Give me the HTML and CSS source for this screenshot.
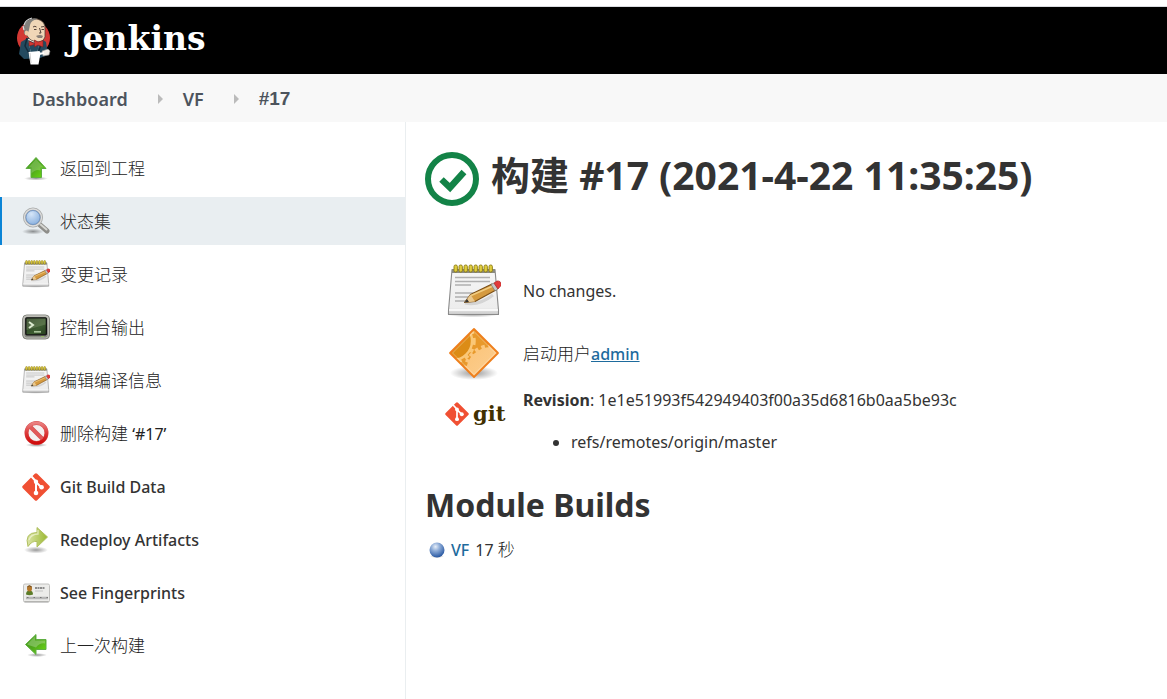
FILE: index.html
```html
<!DOCTYPE html>
<html lang="zh-CN">
<head>
<meta charset="utf-8">
<meta name="viewport" content="width=device-width, initial-scale=1">
<title>VF #17 [Jenkins]</title>
<link rel="stylesheet" href="styles.css">
</head>
<body>
<svg class="defs" aria-hidden="true">
  <defs>
    <linearGradient id="g-green" x1="0" y1="0" x2="1" y2="1"><stop offset="0" stop-color="#3f9a12"/><stop offset=".5" stop-color="#50a81c"/><stop offset="1" stop-color="#6fe010"/></linearGradient>
    <linearGradient id="g-paper" x1="0" y1="0" x2="0" y2="1"><stop offset="0" stop-color="#f6f6f6"/><stop offset=".85" stop-color="#ededed"/><stop offset="1" stop-color="#c9c9c9"/></linearGradient>
    <radialGradient id="g-lens" cx=".4" cy=".3" r=".75"><stop offset="0" stop-color="#d6e6f8"/><stop offset="1" stop-color="#7ea8da"/></radialGradient>
    <radialGradient id="g-shadow"><stop offset="0" stop-color="#000" stop-opacity=".4"/><stop offset="1" stop-color="#000" stop-opacity="0"/></radialGradient>
    <linearGradient id="g-screen" x1="0" y1="0" x2="1" y2="1"><stop offset="0" stop-color="#22371d"/><stop offset=".6" stop-color="#3d5c31"/><stop offset="1" stop-color="#263d1e"/></linearGradient>
    <linearGradient id="g-metal" x1="0" y1="0" x2="0" y2="1"><stop offset="0" stop-color="#b5b5ae"/><stop offset="1" stop-color="#858780"/></linearGradient>
    <linearGradient id="g-red" x1="0" y1="0" x2="0" y2="1"><stop offset="0" stop-color="#ea8080"/><stop offset=".5" stop-color="#dc3a3a"/><stop offset="1" stop-color="#cf0c0c"/></linearGradient>
    <linearGradient id="g-lime" x1="0" y1="0" x2="1" y2="0"><stop offset="0" stop-color="#dbe4a6"/><stop offset="1" stop-color="#9bb932"/></linearGradient>
    <linearGradient id="g-orange" x1="0" y1="0" x2="1" y2="1"><stop offset="0" stop-color="#fbc479"/><stop offset="1" stop-color="#fdd5a0"/></linearGradient>
    <radialGradient id="g-ball" cx=".4" cy=".28" r=".7"><stop offset="0" stop-color="#e6eef8"/><stop offset=".4" stop-color="#8fadd8"/><stop offset="1" stop-color="#2c5ba4"/></radialGradient>
    <clipPath id="c-diamond"><path d="M27 3 51 27 27 51 3 27Z"/></clipPath>
  </defs>
  <symbol id="i-up" viewBox="0 0 28 28">
    <ellipse cx="14" cy="24.500" rx="12" ry="2" fill="url(#g-shadow)"/>
    <path d="M14 3.500 24 14.500h-4.500v9h-10.500v-9H4Z" fill="url(#g-green)" stroke="#5fae42" stroke-width="1" stroke-linejoin="round"/>
    <path d="M14 5 21.500 13.500h-3v3q-5-2-9 3v-6H6.500Z" fill="#fff" opacity=".2"/>
  </symbol>
  <symbol id="i-left" viewBox="0 0 28 28">
    <ellipse cx="15" cy="24" rx="10" ry="2" fill="url(#g-shadow)"/>
    <path d="M3.500 13.500 14 3.500v5h10v10H14v5Z" fill="url(#g-green)" stroke="#5fae42" stroke-linejoin="round"/>
    <path d="M5 13.500 13 5.500v4h10v3q-5-1-9 4Z" fill="#fff" opacity=".25"/>
  </symbol>
  <symbol id="i-search" viewBox="0 0 28 28">
    <ellipse cx="11" cy="24.500" rx="11" ry="3" fill="url(#g-shadow)"/>
    <path d="m17 17 8 7" stroke="#8e8e8a" stroke-width="5" stroke-linecap="round"/>
    <path d="m18 17 6.500 5.500" stroke="#d6d6d2" stroke-width="2" stroke-linecap="round"/>
    <circle cx="11" cy="10.500" r="8.500" fill="url(#g-lens)" stroke="#a8aaa9" stroke-width="3"/>
    <circle cx="11" cy="10.500" r="8.500" fill="none" stroke="#dedede" stroke-width="1.300"/>
    <circle cx="11" cy="10.500" r="7" fill="none" stroke="#628dc6" stroke-width=".7"/>
  </symbol>
  <symbol id="i-notes" viewBox="0 0 54 54">
    <ellipse cx="26" cy="50" rx="27" ry="3.500" fill="url(#g-shadow)"/>
    <path d="M5 5.500h43l3.500 41v4H1.500v-4Z" fill="url(#g-paper)" stroke="#8a8a8a" stroke-width="1.100" stroke-linejoin="round"/>
    <path d="M2 46h49" stroke="#fff" stroke-width="1.500"/>
    <path d="M5 5h43v4H5Z" fill="#8a8a80"/>
    <g fill="#dfcd3d" stroke="#8d7a12" stroke-width=".9"><rect x="7" y="1" width="3.400" height="7" rx="1.500"/><rect x="12" y="1" width="3.400" height="7" rx="1.500"/><rect x="17" y="1" width="3.400" height="7" rx="1.500"/><rect x="22" y="1" width="3.400" height="7" rx="1.500"/><rect x="27" y="1" width="3.400" height="7" rx="1.500"/><rect x="32" y="1" width="3.400" height="7" rx="1.500"/><rect x="37" y="1" width="3.400" height="7" rx="1.500"/><rect x="42" y="1" width="3.400" height="7" rx="1.500"/></g>
    <path d="M8 13.500h35M8 17.500h35M8 21h16M8 29h35M8 33h13M8 37h11" stroke="#b0b0b0" stroke-width="1.300"/>
    <path d="M18 39Q32 42 46 31" stroke="#999" stroke-width="3" opacity=".3" fill="none"/>
    <path d="m17.500 38.500 6-8L45 20l4 6-21 11.500Z" fill="#d59a3f" stroke="#7b4f17" stroke-width="1.100" stroke-linejoin="round"/>
    <path d="m24 31.500 22-9.500" stroke="#f1cc80" stroke-width="1.500"/>
    <path d="m17.500 38.500 6-8 4.500 7Z" fill="#e9c88f"/>
    <path d="m17.500 38.500 2.500-3.500 2 3Z" fill="#333"/>
    <path d="m44 20.500 3-1.500 4 6-3 1.800Z" fill="#c8c8c8" stroke="#777" stroke-width=".7"/>
    <path d="m47 19 3-2q4-.5 4.500 4l-3.500 4Z" fill="#e33a3a" stroke="#b52525" stroke-width=".7"/>
  </symbol>
  <symbol id="i-term" viewBox="0 0 28 28">
    <rect x=".7" y="2" width="26.800" height="24" rx="4" fill="url(#g-metal)" stroke="#83857e"/>
    <rect x="1.800" y="3" width="24.600" height="22" rx="3" fill="none" stroke="#cacac4" stroke-width=".8"/>
    <rect x="3.800" y="4.800" width="20.600" height="17" rx="1" fill="url(#g-screen)" stroke="#111" stroke-width="1.300"/>
    <path d="M4.500 5.500h19v6L4.500 17Z" fill="#9aab86" opacity=".3"/>
    <path d="m7 9 4 3-4 3" fill="none" stroke="#dbe9cf" stroke-width="2"/>
    <path d="M12 18.800h7" stroke="#a7c299" stroke-width="1.700"/>
    <path d="M19 23.600h3" stroke="#93bd60" stroke-width="1"/>
  </symbol>
  <symbol id="i-stop" viewBox="0 0 28 28">
    <ellipse cx="14.500" cy="26" rx="11" ry="2" fill="url(#g-shadow)"/>
    <circle cx="14.500" cy="14" r="10" fill="#f4f0f0" stroke="#d65050" stroke-width="4"/>
    <path d="m7.500 7 14 14" stroke="#d65050" stroke-width="4"/>
    <path d="m7.500 7 14 14" stroke="#e15a5a" stroke-width="3"/>
    <circle cx="14.500" cy="14" r="10" fill="none" stroke="url(#g-red)" stroke-width="3.200"/>
  </symbol>
  <symbol id="i-git" viewBox="0 0 28 28">
    <path d="M12.800.8q1.200-1.200 2.400 0l12 12q1.200 1.200 0 2.400l-12 12q-1.200 1.200-2.400 0l-12-12q-1.200-1.200 0-2.400Z" fill="#f05033"/>
    <path d="m9.500 3.500 4.500 5v12M14 9l5.500 5.500" fill="none" stroke="#fff" stroke-width="2"/>
    <g fill="#fff"><circle cx="14" cy="8.700" r="2.200"/><circle cx="14" cy="20" r="2.300"/><circle cx="19.600" cy="14.300" r="2.300"/></g>
  </symbol>
  <symbol id="i-redo" viewBox="0 0 28 28">
    <ellipse cx="14" cy="24" rx="12" ry="3.500" fill="url(#g-shadow)"/>
    <path d="M15 1.500 25.500 11 15 21v-5.500q-5-1-9 5-4-14 9-14Z" fill="url(#g-lime)" stroke="#b0c060" stroke-linejoin="round"/>
    <path d="M16 4v4q-7 0-9 6" fill="none" stroke="#f4f7d8" stroke-width="1.300" opacity=".7"/>
  </symbol>
  <symbol id="i-card" viewBox="0 0 28 28">
    <rect x="1.500" y="5" width="26" height="18" rx="1.500" fill="#ececea" stroke="#c0c0be"/>
    <path d="M2.500 22.800h24" stroke="#a5a5a3"/>
    <path d="M4 15.500q0-4 3.500-4t3.500 4q-3.500 1.500-7 0Z" fill="#5c7c28"/>
    <ellipse cx="7.500" cy="9.500" rx="2.500" ry="3" fill="#b5772a"/>
    <path d="M5.200 8q2-2.500 4.600 0" fill="none" stroke="#6f4d21"/>
    <path d="M13 9h9.500" stroke="#8c8c8c" stroke-width="1.800" stroke-dasharray="2 .5"/>
    <path d="M13 12h8" stroke="#c4c4c4"/>
    <path d="M4 19h22" stroke="#b7b7b7" stroke-width="2.500"/>
    <path d="M5 18.500h21" stroke="#777" stroke-dasharray="1.500 5"/>
  </symbol>
</svg>

<header class="topbar">
  <a class="brand" href="#">
    <svg class="butler" viewBox="0 0 36 48" aria-hidden="true">
      <circle cx="17.500" cy="21" r="16.500" fill="#d33833"/>
      <path d="M5 25 12 21h12l6 4 2 13-8 3-16 1-5-5Z" fill="#244a5f"/>
      <path d="M12 22h12l-3 14h-6Z" fill="#f5f0e6"/>
      <path d="m12 23 3 13h6l3-12-5 2Z" fill="#244a5f"/>
      <path d="M11 21 9 29l5 9M24 23l1 5-3 8" fill="none" stroke="#142b3a" stroke-width="1.500"/>
      <path d="M9 10Q12 1 21 2q9 2 8 11v7q-2 5-7 5-8-1-10-5l-3-4Z" fill="#f0d6b7" stroke="#513f35" stroke-width=".8"/>
      <path d="M8 14Q6 8 11 4q5-4 11-2-7 1-8 6l-1 5-2 5q-4 0-3-4Z" fill="#82807c"/>
      <path d="M8 8q1-5 8-7M8 13l-1-4" fill="none" stroke="#ddd" stroke-width="1.200"/>
      <ellipse cx="10.500" cy="16" rx="1.800" ry="2.600" fill="#efcaa5"/>
      <path d="M17 10q2-1.500 3.500 0m4.500 0 3-.5M18 12.500h2.500m5 0H28M23.500 11l1.500 5h-2" fill="none" stroke="#54423a" stroke-width="1"/>
      <path d="M20 19q4-2 7 0l-1 2h-4Z" fill="#8a8078"/>
      <path d="m13 24 5.500 2.500V23l3.500 2 5-1.500V30l-5-2-3.500 2v-2.500L13 29Z" fill="#d33833" stroke="#7b1e1c" stroke-width=".6"/>
      <path d="m12.500 35 11-1 1 2-2 11.500h-8Z" fill="#fff"/>
      <path d="m14 36 1 10" stroke="#ccc"/>
      <path d="m26 34 6-2 2 2-1 4-6 1Z" fill="#f3eee7" stroke="#888" stroke-width=".6"/>
      <path d="m23 37 5-1" stroke="#fff" stroke-width="2"/>
    </svg>
    <span class="brand-name">Jenkins</span>
  </a>
</header>

<nav class="crumbs" aria-label="Breadcrumb">
  <a href="#">Dashboard</a>
  <span class="crumb-arrow"></span>
  <a href="#">VF</a>
  <span class="crumb-arrow"></span>
  <a class="crumb-number" href="#">#17</a>
</nav>

<div class="page">
  <nav class="tasks" aria-label="Tasks">
    <a class="task" href="#"><svg><use href="#i-up"/></svg><span>返回到工程</span></a>
    <a class="task active" href="#"><svg><use href="#i-search"/></svg><span>状态集</span></a>
    <a class="task" href="#"><svg><use href="#i-notes"/></svg><span>变更记录</span></a>
    <a class="task" href="#"><svg><use href="#i-term"/></svg><span>控制台输出</span></a>
    <a class="task" href="#"><svg><use href="#i-notes"/></svg><span>编辑编译信息</span></a>
    <a class="task" href="#"><svg><use href="#i-stop"/></svg><span>删除构建<span class="build-ref"> ‘#17’</span></span></a>
    <a class="task latin" href="#"><svg><use href="#i-git"/></svg><span>Git Build Data</span></a>
    <a class="task latin" href="#"><svg><use href="#i-redo"/></svg><span>Redeploy Artifacts</span></a>
    <a class="task latin" href="#"><svg><use href="#i-card"/></svg><span>See Fingerprints</span></a>
    <a class="task" href="#"><svg><use href="#i-left"/></svg><span>上一次构建</span></a>
  </nav>

  <main class="main">
    <h1 class="title">
      <svg class="status" viewBox="0 0 54 54" role="img" aria-label="Success"><circle cx="27" cy="27" r="24" fill="none" stroke="#138347" stroke-width="6"/><path d="m16.500 27.500 8.500 8L39 20" fill="none" stroke="#138347" stroke-width="6.500"/></svg>
      <span>构建 #17 (2021-4-22 11:35:25)</span>
    </h1>

    <div class="summary">
      <svg class="pic"><use href="#i-notes"/></svg>
      <p>No changes.</p>

      <svg class="pic" viewBox="0 0 54 54" aria-hidden="true">
        <ellipse cx="27" cy="47" rx="24" ry="7" fill="url(#g-shadow)"/>
        <g clip-path="url(#c-diamond)">
          <path d="M0 0h54v54H0Z" fill="#e8992b"/>
          <circle cx="44" cy="46" r="25" fill="url(#g-orange)"/>
          <circle cx="44" cy="46" r="26" fill="none" stroke="#fbc67d" stroke-width="4" stroke-dasharray="3.500 3.500"/>
          <circle cx="6" cy="15" r="19" fill="#dc8c16" stroke="#fac777" stroke-width="2.500"/>
          <circle cx="6" cy="15" r="21" fill="none" stroke="#fac777" stroke-width="3.500" stroke-dasharray="4 4"/>
        </g>
        <path d="M27 3 51 27 27 51 3 27Z" fill="none" stroke="#ef7f1c" stroke-width="1.800" stroke-linejoin="round"/>
        <path d="M27 5.500 48.500 27 27 48.500 5.500 27Z" fill="none" stroke="#fff" stroke-opacity=".3"/>
      </svg>
      <p><span class="cause">启动用户</span><a class="user" href="#">admin</a></p>

      <div class="git-logo"><svg><use href="#i-git"/></svg><span>git</span></div>
      <div class="revision">
        <p><b>Revision</b>: 1e1e51993f542949403f00a35d6816b0aa5be93c</p>
        <ul><li>refs/remotes/origin/master</li></ul>
      </div>
    </div>

    <h2 class="subtitle">Module Builds</h2>
    <p class="module">
      <svg class="ball" viewBox="0 0 16 16" aria-hidden="true"><ellipse cx="8" cy="14.500" rx="7" ry="1.500" fill="url(#g-shadow)"/><circle cx="8" cy="8" r="7.500" fill="url(#g-ball)"/></svg>
      <a href="#">VF</a>
      <span>17 <span class="cause">秒</span></span>
    </p>
  </main>
</div>
</body>
</html>
```
FILE: styles.css
```css
* {
  box-sizing: border-box;
}

body {
  margin: 0;
  min-height: 100vh;
  display: flex;
  flex-direction: column;
  background: #fff;
  color: #333;
  font-family: "Noto Sans", "Noto Sans CJK SC", sans-serif;
  font-size: 16px;
  line-height: 24px;
}

a {
  color: inherit;
  text-decoration: none;
}

h1, h2, p, ul {
  margin: 0;
}

.defs {
  position: absolute;
  width: 0;
  height: 0;
}

.topbar {
  margin-top: 6px;
  padding: 10px 16px 9px;
  border-top: 1px solid #dadce0;
  background: #000;
}

.brand {
  display: flex;
  align-items: center;
  gap: 15px;
  width: max-content;
}

.butler {
  width: 36px;
  height: 48px;
}

.brand-name {
  padding-bottom: 4px;
  color: #fff;
  font-family: "DejaVu Serif", serif;
  font-size: 33px;
  font-weight: bold;
  line-height: 40px;
}

.crumbs {
  display: flex;
  align-items: center;
  padding: 13px 32px 11px;
  background: #f8f8f8;
  color: #4d545d;
  font-size: 18px;
  font-weight: 600;
}

.crumb-arrow {
  margin: 0 20px 0 30px;
  border: solid transparent;
  border-width: 5px 0 5px 5px;
  border-left-color: #bbb;
}

.crumb-number {
  font-family: "Liberation Sans", sans-serif;
  font-size: 19px;
  font-weight: bold;
}

.page {
  flex: 1;
  display: grid;
  grid-template-columns: 406px 1fr;
}

.tasks {
  display: flex;
  flex-direction: column;
  gap: 5px;
  padding-top: 22px;
  border-right: 1px solid #eaeef0;
}

.task {
  display: flex;
  align-items: center;
  gap: 10px;
  height: 48px;
  padding-left: 20px;
  border-left: 2px solid transparent;
  color: #222;
  font-family: "Noto Sans CJK SC", sans-serif;
  font-size: 17px;
  font-weight: 300;
}

.task svg {
  flex: none;
  width: 28px;
  height: 28px;
}

.task.active {
  border-left-color: #0b84d6;
  background: #e9eef1;
}

.task.latin {
  padding-top: 2px;
  color: #333;
  font-family: "Noto Sans", sans-serif;
  font-size: 16px;
  font-weight: 500;
}

.build-ref {
  font-family: "Noto Sans", sans-serif;
  font-size: 16px;
  font-weight: 400;
}

.main {
  padding: 28px 19px;
}

.title {
  display: flex;
  gap: 12px;
  font-size: 39px;
  line-height: 50px;
}

.status {
  flex: none;
  width: 54px;
  height: 54px;
  margin-top: 2px;
}

.summary {
  display: grid;
  grid-template-columns: 58px 1fr;
  column-gap: 20px;
  row-gap: 8px;
  align-items: center;
  justify-items: start;
  margin: 58px 0 0 20px;
}

.pic {
  justify-self: center;
  width: 54px;
  height: 54px;
  overflow: visible;
}

.cause {
  color: #222;
  font-family: "Noto Sans CJK SC", sans-serif;
  font-size: 17px;
  font-weight: 300;
}

.user {
  color: #1e6b9d;
  font-weight: 500;
  text-decoration: underline;
}

.git-logo {
  align-self: start;
  display: flex;
  align-items: center;
  gap: 4px;
  padding-top: 14px;
  color: #413000;
  font-family: "DejaVu Serif", serif;
  font-size: 21px;
  font-weight: bold;
}

.git-logo svg {
  width: 24px;
  height: 24px;
}

.revision ul {
  margin-top: 18px;
  padding-left: 48px;
}

.subtitle {
  margin-top: 28px;
  font-size: 32px;
  line-height: 46px;
}

.module {
  display: flex;
  align-items: center;
  gap: 6px;
  margin-top: 9px;
  padding-left: 4px;
}

.module a {
  color: #1e6b9d;
  font-weight: 500;
}

.ball {
  width: 16px;
  height: 16px;
}
```
